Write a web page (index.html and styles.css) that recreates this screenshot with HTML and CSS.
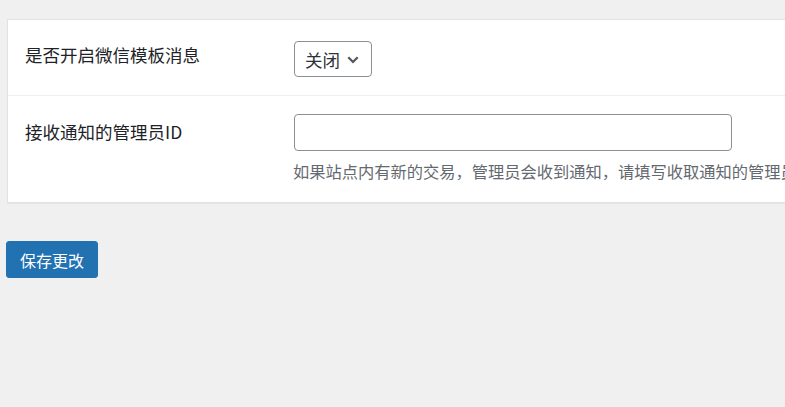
FILE: index.html
```html
<!DOCTYPE html>
<html lang="zh-CN">
<head>
<meta charset="utf-8">
<title>设置</title>
<link rel="stylesheet" href="styles.css">
</head>
<body>
<div class="page">
  <div class="top-note"><a href="#" class="top-link">p</a></div>
  <div class="card">
    <div class="row row-first">
      <div class="label">是否开启微信模板消息</div>
      <div class="field">
        <div class="select">
          <span>关闭</span>
          <svg class="chev" width="12" height="8" viewBox="0 0 12 8"><path d="M1.3 1.3 L6 6 L10.7 1.3" fill="none" stroke="#50575e" stroke-width="2.2"/></svg>
        </div>
      </div>
    </div>
    <div class="row row-second">
      <div class="label">接收通知的管理员ID</div>
      <div class="field">
        <div class="input"></div>
        <p class="desc">如果站点内有新的交易，管理员会收到通知，请填写收取通知的管理员ID</p>
      </div>
    </div>
  </div>
  <div class="actions">
    <button class="btn">保存更改</button>
  </div>
</div>
</body>
</html>
```

FILE: styles.css
```css
html, body {
  margin: 0;
  padding: 0;
  overflow: hidden;
  background: #f0f0f1;
}
body {
  font-family: "Noto Sans CJK SC", "Noto Sans", sans-serif;
  color: #1d2327;
}
.page {
  width: 1200px;
}
.top-note {
  height: 19px;
  overflow: hidden;
  padding-left: 150px;
}
.top-link {
  display: block;
  margin-top: -18px;
  font-size: 17px;
  line-height: 20px;
  color: #2271b1;
  text-decoration: none;
  font-family: "Liberation Sans", sans-serif;
}
.card {
  margin-left: 7px;
  width: 1100px;
  background: #fff;
  border: 1px solid #e2e2e3;
  box-shadow: 0 1px 1px rgba(0,0,0,.04);
}
.row {
  display: grid;
  grid-template-columns: 269px 1fr;
  align-items: start;
  padding-left: 17px;
}
.row-first {
  padding-top: 21px;
  padding-bottom: 18px;
  border-bottom: 1px solid #f0f0f1;
}
.row-second {
  padding-top: 18px;
  padding-bottom: 19px;
}
.label {
  font-size: 17.5px;
  line-height: 24px;
  color: #1d2327;
}
.row-first .label { margin-top: 2px; }
.row-second .label { margin-top: 6px; }
.select {
  box-sizing: border-box;
  width: 78px;
  height: 36px;
  border: 1px solid #8c8f94;
  border-radius: 4px;
  display: flex;
  align-items: center;
  padding-left: 10px;
  gap: 7px;
  font-size: 17.5px;
  color: #2c3338;
}
.chev { display: block; margin-top: 1px; }
.input {
  box-sizing: border-box;
  width: 438px;
  height: 37px;
  border: 1px solid #8c8f94;
  border-radius: 4px;
}
.desc {
  margin: 8px 0 0 -1px;
  font-size: 16.25px;
  line-height: 24px;
  color: #646970;
  white-space: nowrap;
}
.actions {
  padding: 38px 0 0 6px;
}
.btn {
  width: 92px;
  height: 37px;
  background: #2271b1;
  color: #fff;
  border: 1px solid #2271b1;
  border-radius: 3px;
  font-family: "Noto Sans CJK SC", sans-serif;
  font-size: 16px;
  padding: 0;
}
```
